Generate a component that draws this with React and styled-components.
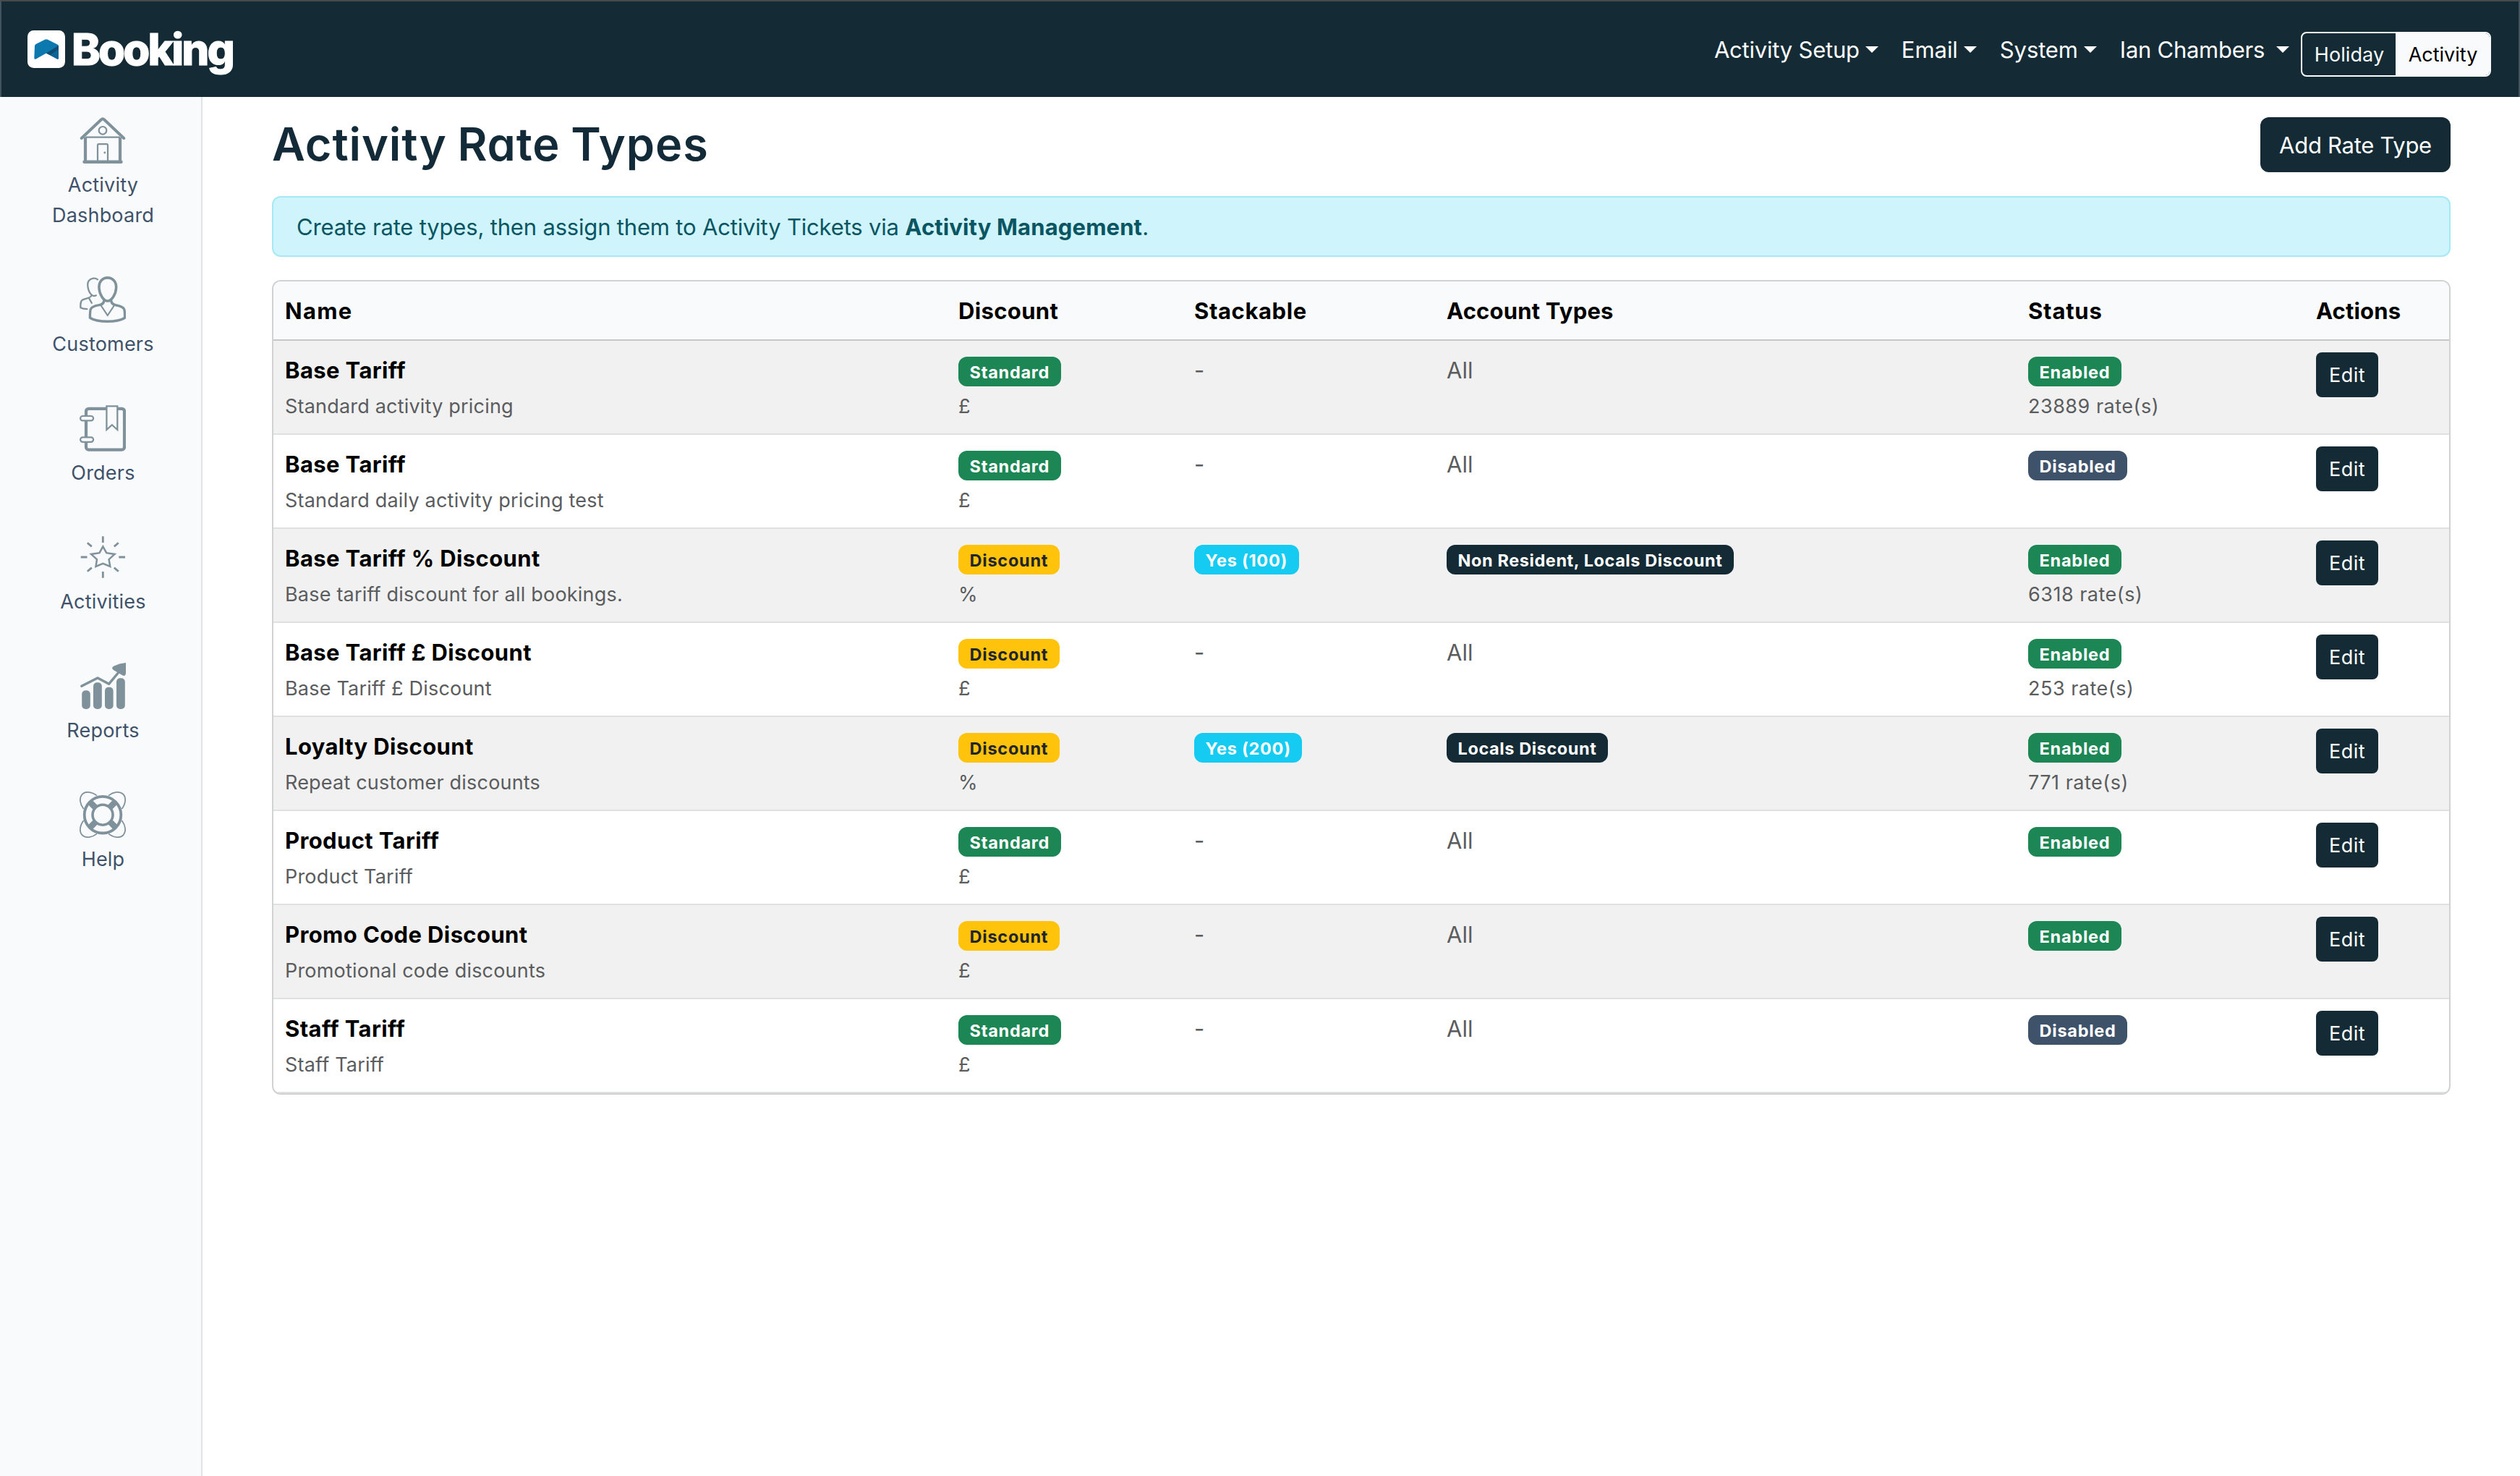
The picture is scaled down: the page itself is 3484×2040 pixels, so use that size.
import React from 'react';
import styled, { createGlobalStyle } from 'styled-components';

const color = {
  navy: '#142a35',
  slate: '#3e526a',
  panel: '#f9fafc',
  icon: '#7f929b',
  muted: '#5a5c5e',
  green: '#1c8755',
  yellow: '#ffc30b',
  cyan: '#15cbf2',
};

const GlobalStyle = createGlobalStyle`
  *, *::before, *::after { box-sizing: border-box; }
  body {
    margin: 0;
    background: #fff;
    color: #000;
    font-family: Inter, "Liberation Sans", sans-serif;
    font-size: 31px;
    line-height: 48px;
    -webkit-font-smoothing: antialiased;
  }
`;

const Page = styled.div`
  display: flex;
  flex-direction: column;
  min-height: 100vh;
`;

const TopBar = styled.header`
  display: flex;
  justify-content: space-between;
  align-items: flex-start;
  height: 134px;
  padding: 40px 38px 0 36px;
  background: ${color.navy};
  border: 2px solid #42535d;
  border-top-color: #484a4b;
  border-bottom: 0;
`;

const Brand = styled.a`
  display: flex;
  align-items: flex-start;
  gap: 9px;
  color: #fff;
`;

const BrandName = styled.span`
  font-size: 60px;
  font-weight: 780;
  line-height: 53px;
  letter-spacing: -2.9px;
  -webkit-text-stroke: 1px #fff;
`;

const Nav = styled.nav`
  display: flex;
  align-items: flex-start;
  padding-top: 2px;
`;

const NavLink = styled.a`
  display: flex;
  align-items: center;
  gap: ${p => p.$gap || 8}px;
  height: 48px;
  padding: 1px 16px 0;
  color: #fff;
  white-space: nowrap;
  letter-spacing: ${p => p.$track || 0}px;

  &::after {
    content: "";
    margin-bottom: 1px;
    border: 9px solid transparent;
    border-top: 9.6px solid #fff;
    border-bottom: 0;
  }
`;

const Segmented = styled.div`
  display: flex;
  height: 62px;
  border: 2px solid ${color.panel};
  border-radius: 8px;
  overflow: hidden;
  font-size: 27px;
  line-height: 42px;
`;

const Segment = styled.button`
  width: ${p => p.$width}px;
  padding: 9px 0 7px 1px;
  border: 0;
  font: inherit;
  letter-spacing: ${p => p.$track}px;
  background: ${p => (p.$active ? color.panel : 'transparent')};
  color: ${p => (p.$active ? '#000' : color.panel)};
`;

const Body = styled.div`
  display: flex;
  flex: 1;
`;

const Sidebar = styled.aside`
  display: flex;
  flex-direction: column;
  align-items: center;
  gap: 64px;
  width: 280px;
  flex: none;
  padding: 28px 0 0 6px;
  background: ${color.panel};
  border-right: 2px solid #dfe4e5;
`;

const SideItem = styled.a`
  display: flex;
  flex-direction: column;
  align-items: center;
  gap: 9px;
  width: 150px;
  margin-bottom: -1px;
  color: ${color.slate};
  font-size: 27px;
  line-height: 42px;
  letter-spacing: 0.2px;
  text-align: center;
`;

const SideLabel = styled.span`
  padding-left: 1px;
`;

const Icon = styled.svg`
  display: block;
  width: 64px;
  height: 64px;
  fill: none;
  stroke: ${color.icon};
`;

const Main = styled.main`
  flex: 1;
  padding: 28px 96px 0;
`;

const TitleRow = styled.div`
  display: flex;
  justify-content: space-between;
  align-items: flex-start;
  height: 76px;
`;

const Title = styled.h1`
  margin: 0;
  color: #132b38;
  font-size: 63px;
  font-weight: 560;
  line-height: 74px;
  letter-spacing: 0.9px;
  word-spacing: -2px;
  font-feature-settings: "cv11";
`;

const Button = styled.button`
  border: 0;
  background: ${color.navy};
  color: #fff;
  font: inherit;
  white-space: nowrap;
`;

const PrimaryButton = styled(Button)`
  width: 263px;
  height: 76px;
  padding: 15px 0 13px;
  border-radius: 12px;
  letter-spacing: -0.28px;
`;

const EditButton = styled(Button)`
  display: block;
  width: 86px;
  height: 62px;
  padding: 11px 0 9px;
  border-radius: 8px;
  font-size: 27px;
  line-height: 42px;
  letter-spacing: 0.5px;
`;

const Alert = styled.div`
  margin: 33px 0 32px;
  padding: 17px 32px 15px;
  border: 2px solid #a4e9f5;
  border-radius: 12px;
  background: #cff4fc;
  color: #0a5562;
  letter-spacing: -0.18px;

  strong { font-weight: 700; letter-spacing: 0.14px; }
`;

const Card = styled.div`
  border: 2px solid #d1d2d2;
  border-radius: 12px;
  overflow: hidden;
`;

const Table = styled.table`
  width: 100%;
  table-layout: fixed;
  border-collapse: separate;
  border-spacing: 0;
`;

const Col = styled.col`
  width: ${p => p.$width}px;
`;

const HeadCell = styled.th`
  height: 82px;
  padding: 17px 16px 15px;
  text-align: left;
  font-weight: 700;
  letter-spacing: ${p => p.$track}px;
  background: ${color.panel};
  border-bottom: 2px solid #c6c7c8;
`;

const Row = styled.tr`
  &:nth-child(odd) { background: #f1f1f1; }
`;

const Cell = styled.td`
  height: 130px;
  padding: ${p => (p.$action ? 16 : 17)}px 16px 0;
  vertical-align: top;
  color: ${color.muted};
  border-bottom: 2px solid #dfe0e0;
`;

const Line = styled.div`
  height: 48px;
  white-space: nowrap;
`;

const Name = styled.strong`
  color: #000;
  font-weight: 700;
  letter-spacing: 0.38px;
`;

const Small = styled.small`
  font-size: 27px;
  letter-spacing: ${p => p.$track || 0.2}px;
`;

const tones = {
  Standard: [color.green, '#fff'],
  Enabled: [color.green, '#fff'],
  Disabled: [color.slate, '#fff'],
  Discount: [color.yellow, '#212529'],
  stack: [color.cyan, '#fff'],
  account: [color.navy, '#fff'],
};

const Badge = styled.span`
  display: inline-block;
  padding: 10px 15.6px 7px;
  border-radius: 12px;
  background: ${p => tones[p.$tone][0]};
  color: ${p => tones[p.$tone][1]};
  font-size: 23.5px;
  font-weight: 700;
  line-height: 24px;
  letter-spacing: ${p => (p.$tone === 'account' ? 0.58 : 0.74)}px;
`;

const LogoMark = () => (
  <svg width="52" height="52" viewBox="0 0 52 52">
    <rect width="52" height="52" rx="8.5" fill="#fff" />
    <path d="M10 21.5Q10 20 11.5 19L24 12.8Q26 11.8 28 12.8L41.5 19.5Q43 20.3 43 22V38Q43 40.3 41 39.5L26 31.5L11.8 39.6Q9.3 40.5 9.3 38Z" fill="#0b79ae" />
    <path d="M26 31.5L43 21V38Q43 40.3 41 39.5Z" fill="#0c6595" />
    <path d="M26 31.5L43 21V26L31 34Z" fill="#0f4d74" />
  </svg>
);

const HouseIcon = () => (
  <Icon viewBox="0 0 64 64" strokeLinecap="round" strokeLinejoin="round">
    <path d="M2.8 29L30 3.2Q32 1.4 34 3.2L61.2 29" strokeWidth="4" />
    <circle cx="32" cy="18.3" r="5.3" strokeWidth="2.2" />
    <path d="M9 27.7H55" strokeWidth="2.2" />
    <path d="M8 28V60M56 28V60" strokeWidth="4.2" strokeLinecap="butt" />
    <path d="M6.5 61.7H57.5" strokeWidth="4.4" />
    <path d="M25 60V38.5Q25 37.2 26.3 37.2H37.7Q39 37.2 39 38.5V60" strokeWidth="2.2" />
    <circle cx="34.8" cy="49" r="1.4" fill={color.icon} stroke="none" />
  </Icon>
);

const CustomersIcon = () => (
  <Icon viewBox="0 0 64 64" strokeLinecap="round" strokeLinejoin="round">
    <path d="M38.7 1.9C31 1.9 26.6 8 27 16C27.4 24.5 33 34 38.7 34C44.4 34 50.2 24.5 50.6 16C51 8 46.4 1.9 38.7 1.9Z" strokeWidth="3.6" />
    <path d="M33.8 33.5C33.5 37.5 31 39 27 39.7C21 40.7 16.5 42.3 15.3 45.5C14.4 48 14.4 54 14.4 57.2C20 60.8 30 62.3 38.7 62.3C47.5 62.3 57 60.8 62.6 57.2C62.6 54 62.6 48 61.7 45.5C60.5 42.3 56 40.7 50 39.7C46.5 39 44 37.5 43.7 33.5" strokeWidth="3.4" />
    <path d="M29.5 40L38.7 54L48 40" strokeWidth="2.2" />
    <path d="M25 4.3C22 1.8 16 2 12.8 6C9.4 11 12 22.5 17.5 26.2C19.5 27.3 21.3 27 22.8 26.2M16.2 26.8C16 30 8 30.3 4 32.5C1.2 34 1.3 38 1.3 43.2C4 44.5 7 45 10.3 45.2M13.2 30.5L16.8 36.8" strokeWidth="2.3" />
  </Icon>
);

const OrdersIcon = () => (
  <Icon viewBox="0 0 64 64">
    <rect x="9" y="4.8" width="53" height="56.8" rx="3.6" strokeWidth="4.2" />
    <path d="M37.4 1.3H52.3V34L44.8 27.2L37.4 34Z" strokeWidth="2.3" fill={color.panel} />
    <rect x="1.1" y="15" width="18" height="6.4" rx="3.2" strokeWidth="2.2" fill={color.panel} />
    <rect x="1.1" y="44.4" width="18" height="6.4" rx="3.2" strokeWidth="2.2" fill={color.panel} />
  </Icon>
);

const ActivitiesIcon = () => (
  <Icon viewBox="0 0 64 64" strokeWidth="2.5">
    <path d="M32.3 17.3L37.2 26.2L48.5 27.9L40.6 35.2L42.3 45L32.3 40.8L22.5 45L24 35.2L16 27.9L27.5 26.2Z" />
    <path d="M32.3 3.3V12M32.3 52V60.8M1.7 32H10.5M54.3 32H63M10.8 12.2L16.8 17.4M53.8 12.2L47.8 17.4M10.8 51.8L16.8 46.6M53.8 51.8L47.8 46.6" strokeWidth="2.8" />
  </Icon>
);

const ReportsIcon = () => (
  <Icon viewBox="0 0 64 64" strokeLinecap="round" strokeLinejoin="round">
    <g fill={color.icon} stroke="none">
      <rect x="3.2" y="38.3" width="11.6" height="25.7" rx="5" />
      <rect x="19" y="27.3" width="11.8" height="36.7" rx="5" />
      <rect x="35" y="33.8" width="11.6" height="30.2" rx="5" />
      <rect x="51" y="21.3" width="11.8" height="42.7" rx="5" />
      <path d="M64 0V14.5Q63.5 19.3 59.5 17.5L46.8 10Q43.3 7 47 4.8Q55 .8 64 0Z" />
    </g>
    <path d="M2.8 32.3L25 21L40.5 29.3L55 12" strokeWidth="3.5" />
  </Icon>
);

const HelpIcon = () => (
  <Icon viewBox="0 0 64 64">
    <circle cx="32" cy="32.2" r="25.3" strokeWidth="3.8" />
    <circle cx="32" cy="32.2" r="14" strokeWidth="3.6" />
    {[0, 90, 180, 270].map(angle => (
      <g key={angle} transform={`rotate(${angle} 32 32)`}>
        <path d="M14.5 14.7L22 22.2" strokeWidth="8.5" />
        <path d="M24 5.6C16 -.3 7.5 -.6 3.3 4.2C-.6 9 .2 17 5.6 24" strokeWidth="1.8" />
      </g>
    ))}
  </Icon>
);

const sideItems = [
  ['Activity Dashboard', HouseIcon],
  ['Customers', CustomersIcon],
  ['Orders', OrdersIcon],
  ['Activities', ActivitiesIcon],
  ['Reports', ReportsIcon],
  ['Help', HelpIcon],
];

const columns = [
  ['Name', 931, 1.3],
  ['Discount', 326, 0.35],
  ['Stackable', 349, 0.6],
  ['Account Types', 804, 0.2],
  ['Status', 398, 0.8],
  ['Actions', 200, 0.15],
];

const rates = [
  { name: 'Base Tariff', note: 'Standard activity pricing', type: 'Standard', unit: '£', status: 'Enabled', count: '23889' },
  { name: 'Base Tariff', note: 'Standard daily activity pricing test', type: 'Standard', unit: '£', status: 'Disabled' },
  { name: 'Base Tariff % Discount', note: 'Base tariff discount for all bookings.', type: 'Discount', unit: '%', stack: 'Yes (100)', accounts: 'Non Resident, Locals Discount', status: 'Enabled', count: '6318' },
  { name: 'Base Tariff £ Discount', note: 'Base Tariff £ Discount', type: 'Discount', unit: '£', status: 'Enabled', count: '253' },
  { name: 'Loyalty Discount', note: 'Repeat customer discounts', type: 'Discount', unit: '%', stack: 'Yes (200)', accounts: 'Locals Discount', status: 'Enabled', count: '771' },
  { name: 'Product Tariff', note: 'Product Tariff', type: 'Standard', unit: '£', status: 'Enabled' },
  { name: 'Promo Code Discount', note: 'Promotional code discounts', type: 'Discount', unit: '£', status: 'Enabled' },
  { name: 'Staff Tariff', note: 'Staff Tariff', type: 'Standard', unit: '£', status: 'Disabled' },
];

const RateRow = ({ rate }) => (
  <Row>
    <Cell>
      <Line><Name>{rate.name}</Name></Line>
      <Line><Small>{rate.note}</Small></Line>
    </Cell>
    <Cell>
      <Line><Badge $tone={rate.type}>{rate.type}</Badge></Line>
      <Line><Small>{rate.unit}</Small></Line>
    </Cell>
    <Cell>
      <Line>{rate.stack ? <Badge $tone="stack">{rate.stack}</Badge> : '-'}</Line>
    </Cell>
    <Cell>
      <Line>{rate.accounts ? <Badge $tone="account">{rate.accounts}</Badge> : 'All'}</Line>
    </Cell>
    <Cell>
      <Line><Badge $tone={rate.status}>{rate.status}</Badge></Line>
      {rate.count && <Line><Small $track={0.5}>{rate.count} rate(s)</Small></Line>}
    </Cell>
    <Cell $action><EditButton>Edit</EditButton></Cell>
  </Row>
);

export default function App() {
  return (
    <Page>
      <GlobalStyle />
      <TopBar>
        <Brand>
          <LogoMark />
          <BrandName>Booking</BrandName>
        </Brand>
        <Nav>
          <NavLink $track={-0.22}>Activity Setup</NavLink>
          <NavLink $track={-0.05}>Email</NavLink>
          <NavLink $track={-0.12}>System</NavLink>
          <NavLink $track={-0.27} $gap={16}>Ian Chambers</NavLink>
          <Segmented>
            <Segment $width={129} $track={0.1}>Holiday</Segment>
            <Segment $width={130} $track={0} $active>Activity</Segment>
          </Segmented>
        </Nav>
      </TopBar>
      <Body>
        <Sidebar>
          {sideItems.map(([label, Glyph]) => (
            <SideItem key={label}>
              <Glyph />
              <SideLabel>{label}</SideLabel>
            </SideItem>
          ))}
        </Sidebar>
        <Main>
          <TitleRow>
            <Title>Activity Rate Types</Title>
            <PrimaryButton>Add Rate Type</PrimaryButton>
          </TitleRow>
          <Alert>
            Create rate types, then assign them to Activity Tickets via <strong>Activity Management</strong>.
          </Alert>
          <Card>
            <Table>
              <colgroup>
                {columns.map(([label, width]) => <Col key={label} $width={width} />)}
              </colgroup>
              <thead>
                <tr>
                  {columns.map(([label, , track]) => <HeadCell key={label} $track={track}>{label}</HeadCell>)}
                </tr>
              </thead>
              <tbody>
                {rates.map((rate, i) => <RateRow key={i} rate={rate} />)}
              </tbody>
            </Table>
          </Card>
        </Main>
      </Body>
    </Page>
  );
}
